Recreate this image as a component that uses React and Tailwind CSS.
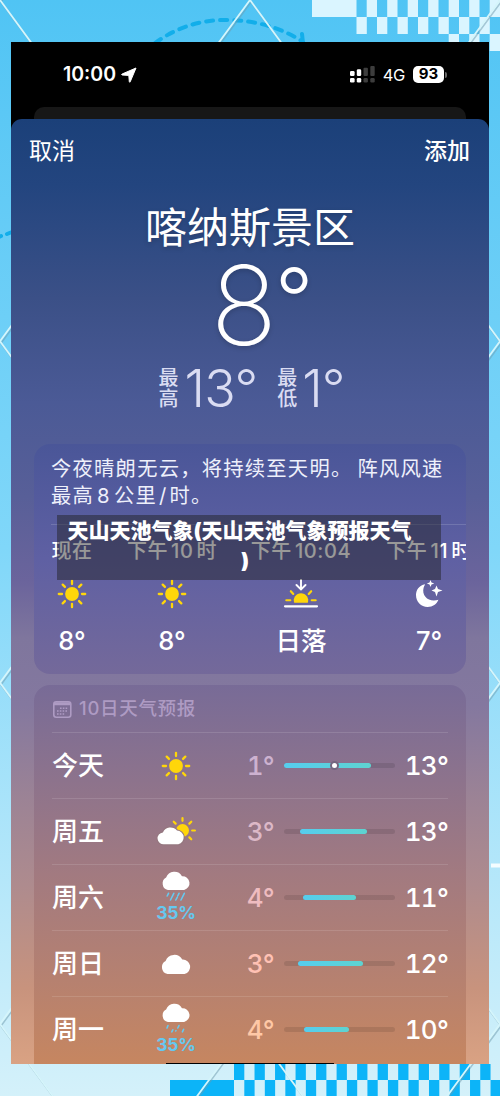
import React from 'react';

const hours = [
  { time: '现在', icon: 'sun', value: '8°' },
  { time: '下午', clock: '10', suffix: '时', icon: 'sun', value: '8°' },
  { time: '下午', clock: '10:04', icon: 'sunset', value: '日落' },
  { time: '下午', clock: '11', suffix: '时', icon: 'moon', value: '7°' },
];

const days = [
  { day: '今天', icon: 'sun', low: '1°', high: '13°', start: 0, width: 87, now: true, lowColor: 'text-[#cdb2d0]' },
  { day: '周五', icon: 'partly', low: '3°', high: '13°', start: 16, width: 67, lowColor: 'text-[#dcb8c7]' },
  { day: '周六', icon: 'rain', chance: '35%', low: '4°', high: '11°', start: 19, width: 53, lowColor: 'text-[#efbcc0]' },
  { day: '周日', icon: 'cloud', low: '3°', high: '12°', start: 14, width: 65, lowColor: 'text-[#ffc1b4]' },
  { day: '周一', icon: 'drizzle', chance: '35%', low: '4°', high: '10°', start: 20, width: 45, lowColor: 'text-[#ffc8a6]' },
];

const CLOUD = 'M7.5 21 A7 7 0 0 1 5.6 8 A9.2 9.2 0 0 1 22.3 6.6 A7.3 7.3 0 0 1 24.5 21 Z';

const Sun = () => (
  <svg width="30" height="30" viewBox="-15 -15 30 30">
    <circle r="6.9" fill="#ffd60a" />
    {[0, 45, 90, 135, 180, 225, 270, 315].map((a) => (
      <line key={a} x1="0" y1="-10" x2="0" y2="-13.2" stroke="#ffd60a" strokeWidth="2.3" strokeLinecap="round" transform={`rotate(${a})`} />
    ))}
  </svg>
);

const Sunset = () => (
  <svg width="36" height="30" viewBox="0 0 36 30" fill="none" strokeLinecap="round">
    <path d="M11.2 23.7 A7.2 7.2 0 1 1 24.8 23.7 Z" fill="#ffd60a" />
    <path d="M3.3 21.3H7.3M28.7 21.3H32.7M7.8 12.2L10.3 15M28.2 12.2L25.7 15" stroke="#ffd60a" strokeWidth="2.1" />
    <path d="M18 0V10M13.5 6L18 10.5L22.5 6" stroke="#fff" strokeWidth="1.9" />
    <path d="M2 27.3H34" stroke="#fff" strokeWidth="2.2" />
  </svg>
);

const Moon = () => (
  <svg width="30" height="30" viewBox="0 0 30 30" fill="#fff">
    <path d="M11.2 5.2 C4.8 6.4 2 11.2 2 16 C2 22.6 7 28 13.6 28 C18.7 28 22.8 25.2 24.4 20.8 C15.5 24 7.3 17.4 9.6 8.8 C10 7.4 10.5 6.3 11.2 5.2 Z" />
    <path d="M22.5 6.5 L24 10 L28.5 11.5 L24 13 L22.5 17.5 L21 13 L17.5 11.5 L21 10 Z" />
    <path d="M16.5 1 L17.5 3.5 L20.3 4.5 L17.5 5.5 L16.5 8 L15.5 5.5 L12.8 4.5 L15.5 3.5 Z" />
  </svg>
);

const Partly = () => (
  <svg width="40" height="30" viewBox="0 0 40 30">
    <g transform="translate(26.5 13.5)">
      <circle r="6.5" fill="#ffd60a" />
      {[-45, 0, 45, 90, 135].map((a) => (
        <line key={a} x1="0" y1="-9.7" x2="0" y2="-12.4" stroke="#ffd60a" strokeWidth="2.2" strokeLinecap="round" transform={`rotate(${a})`} />
      ))}
    </g>
    <path d="M8.2 27.3 A5.9 5.9 0 0 1 6.9 15.4 A8.3 8.3 0 0 1 21 13.5 A7 7 0 0 1 22.3 27.3 Z" fill="#fff" stroke="#95777f" strokeWidth="2.2" paintOrder="stroke" />
  </svg>
);

const Cloud = () => (
  <svg width="32" height="22" viewBox="0 0 32 22">
    <path d={CLOUD} fill="#fff" />
  </svg>
);

const Rain = ({ light }) => (
  <svg className="-mt-[8px] shrink-0" width="32" height="34" viewBox="0 0 32 34">
    <path d={CLOUD} fill="#fff" transform="translate(.8 0) scale(.95)" />
    <path
      d={light ? 'M8 23.5L7 26M12.8 27.8L11.8 29.8M19 23.5L17.8 26M23.6 27.3L22.4 29.8M16 28.6L15.8 29' : 'M8.5 23.3L7.2 26M13.8 23.3L10.5 30M19 23.3L17.7 26M24.3 23.3L21 30M17.2 27.3L15.8 30'}
      stroke="#66c9f0"
      strokeWidth="1.6"
      strokeLinecap="round"
    />
  </svg>
);

const icons = {
  sun: <Sun />,
  sunset: <Sunset />,
  moon: <Moon />,
  partly: <Partly />,
  cloud: <Cloud />,
  rain: <Rain />,
  drizzle: <Rain light />,
};

// Paper texture page: diamond lattice, dashed arcs and checker strips
const Backdrop = () => {
  const top = [[448.7, 34], [469.2, 34], [489.7, 34]];
  for (let i = 0; i < 7; i++) {
    top.push([366.7 + i * 20.5, 0], [356.5 + i * 20.5, 17]);
  }
  const bottom = [];
  for (let i = 0; i < 13; i++) {
    bottom.push([234 + i * 20.52, 1064], [244.3 + i * 20.52, 1080]);
  }
  return (
    <svg className="absolute inset-0" width="500" height="1096" viewBox="0 0 500 1096" fill="none">
      <rect x="312" width="44.5" height="17" fill="#daf5ff" />
      {top.map(([x, y]) => <rect key={`${x}-${y}`} x={x} y={y} width="10.3" height="17" fill="#daf5ff" />)}
      <rect x="170" y="1080" width="64" height="16" fill="#0cb4f8" />
      {bottom.map(([x, y]) => <rect key={`${x}-${y}`} x={x} y={y} width="10.3" height="16" fill="#0cb4f8" />)}
      <path d="M155 43Q187 20 225 20Q270 20 303 42M302 34L303 43" stroke="#12aeea" strokeWidth="4" strokeDasharray="7 7" strokeLinecap="round" />
      <path d="M0 236.5L1 236M7 234L12 232" stroke="#12aeea" strokeWidth="4" strokeLinecap="round" />
      {[0, 341.3, 682.7, 1024].map((y) => (
        <g key={y}>
          <path d={`M1 ${y + 2}L126 ${y + 172}M1 ${y + 2}L126 ${y - 168}M251 ${y + 2}L126 ${y + 172}M251 ${y + 2}L376 ${y + 172}M501 ${y + 2}L376 ${y + 172}M501 ${y + 2}L376 ${y - 168}`} stroke="#6f9cae" strokeOpacity=".5" strokeWidth="1.5" />
          <path d={`M0 ${y}L125 ${y + 170.6}M0 ${y}L125 ${y - 170.6}M250 ${y}L125 ${y + 170.6}M250 ${y}L375 ${y + 170.6}M500 ${y}L375 ${y + 170.6}M500 ${y}L375 ${y - 170.6}`} stroke="#d5f5fb" strokeWidth="1.8" />
        </g>
      ))}
      <path d="M491 865.5H500" stroke="#f4fdff" strokeWidth="4" />
    </svg>
  );
};

const StatusBar = () => (
  <div className="flex h-[65px] shrink-0 items-center justify-between pl-[52px] pr-[42px] text-white">
    <div className="flex items-center gap-[5px] pt-px text-[19.5px] font-semibold">
      10:00
      <svg width="16" height="16" viewBox="0 0 16 16" fill="#fff">
        <path d="M15 1 L9.2 14.8 Q8.7 15.8 8.3 14.6 L7.8 8.4 L1.2 8 Q0 7.6 1.1 7 Z" stroke="#fff" strokeWidth="1" strokeLinejoin="round" />
      </svg>
    </div>
    <div className="flex items-center gap-[8px]">
      <svg width="25" height="17" viewBox="0 0 25 17">
        <g fill="#fff">
          <rect x="0" y="5" width="4.6" height="5" rx="1.3" />
          <rect x="6.8" y="3.3" width="4.4" height="6.7" rx="1.3" />
          <rect x="0" y="12" width="4.6" height="4.6" rx="1.3" />
          <rect x="6.8" y="12" width="4.4" height="4.6" rx="1.3" />
        </g>
        <g fill="#3d3d3d">
          <rect x="13.5" y="1.8" width="4.4" height="8.2" rx="1" />
          <rect x="20.3" y="0" width="4.4" height="10" rx="1" />
          <rect x="13.5" y="12" width="4.4" height="4.6" rx="1.3" />
          <rect x="20.3" y="12" width="4.4" height="4.6" rx="1.3" />
        </g>
      </svg>
      <span className="pt-px text-[16.5px] tracking-[-0.3px]">4G</span>
      <div className="flex items-center gap-px">
        <div className="flex h-[17px] w-[31px] items-center justify-center rounded-[5px] bg-white text-[15px] font-bold text-black">93</div>
        <div className="h-[6px] w-[2px] rounded-r bg-[#666]" />
      </div>
    </div>
  </div>
);

const HourlyCard = () => (
  <div className="mx-[23px] mt-[24px] h-[230px] overflow-hidden rounded-[16px] bg-linear-to-b from-[#4a5698] via-[#5f60a3] to-[#74699a]">
    <p className="h-[80px] whitespace-nowrap pl-[17px] pt-[11px] text-[20.3px] leading-[27px] tracking-[1.25px] text-[#eef0fb]">
      今夜晴朗无云，将持续至天明。<span className="ml-[5px]">阵风风速</span>
      <br />
      最高<span className="mx-[3px]">8</span>公里<span className="mx-[2px]">/</span>时。
    </p>
    <div className="ml-[17px] flex border-t border-white/15 pt-[11px] text-white">
      {hours.map((h, i) => (
        <div
          key={i}
          className={`flex shrink-0 flex-col items-center ${['w-[42px]', 'ml-[33px] w-[92px]', 'ml-[29px] w-[108px]', 'ml-[29px] w-[90px]'][i]}`}
        >
          <span className="flex h-[30px] gap-[3px] whitespace-nowrap text-[20px] font-medium leading-[30px] tracking-[0.6px]">
            {h.time}
            {h.clock && <span>{h.clock}</span>}
            {h.suffix && <span>{h.suffix}</span>}
          </span>
          <div className="mt-[13px] flex h-[30px] items-center">{icons[h.icon]}</div>
          <span className="mt-[14px] text-[25.5px] font-medium leading-[36px]">{h.value}</span>
        </div>
      ))}
    </div>
  </div>
);

const ForecastCard = () => (
  <div className="mx-[23px] mt-[11px] h-[379px] overflow-hidden rounded-t-[16px] bg-linear-to-b from-[#786b97] from-0% via-[#a27a80] via-50% to-[#c68660] px-[18px]">
    <div className="flex h-[47px] items-center gap-[7px] pt-px text-[18.5px] font-medium tracking-[0.7px] text-[#ae9bc3]">
      <svg width="20" height="19" viewBox="0 0 20 19" fill="none">
        <rect x="1.8" y="1.8" width="17" height="15.4" rx="2.5" stroke="#ae9bc3" strokeWidth="1.6" />
        <path d="M2 3.8H18.6" stroke="#ae9bc3" strokeWidth="3" />
        <path d="M8 8.3H16M5 11.1H16M5 13.9H13" stroke="#ae9bc3" strokeWidth="1.5" strokeDasharray="1.6 1.2" />
      </svg>
      10日天气预报
    </div>
    {days.map((d) => (
      <div key={d.day} className="flex h-[66px] items-center border-t border-white/12">
        <span className="w-[92px] text-[26px] font-medium text-white">{d.day}</span>
        <div className="flex w-[64px] flex-col items-center justify-center">
          {icons[d.icon]}
          {d.chance && <span className="mb-[-5px] text-[17.5px] font-bold leading-[18px] tracking-[-0.2px] text-[#65c8f0]">{d.chance}</span>}
        </div>
        <span className={`w-[66px] text-right text-[26px] font-medium tracking-[-0.7px] tabular-nums ${d.lowColor}`}>{d.low}</span>
        <div className="relative ml-[10px] h-[5px] w-[111px] rounded-full bg-black/10">
          <div
            className="absolute inset-y-0 rounded-full bg-linear-to-r from-[#56cdee] to-[#5ed3d0]"
            style={{ left: d.start, width: d.width }}
          />
          {d.now && (
            <div className="absolute -top-[2px] left-[46px] size-[9px] rounded-full border-2 border-[#746780] bg-white" />
          )}
        </div>
        <span className="flex-1 text-right text-[26px] font-medium tracking-[-0.8px] tabular-nums text-white">{d.high}</span>
      </div>
    ))}
  </div>
);

function App() {
  return (
    <div className="relative h-[1096px] w-[500px] overflow-hidden bg-linear-to-b from-[#50c4f4] via-[#80d7f9] via-50% to-[#d4f1fa] font-['Inter','Noto_Sans_CJK_SC',sans-serif]">
      <Backdrop />
      <div className="relative ml-[11px] mt-[42px] flex h-[1022px] w-[478px] flex-col overflow-hidden bg-black">
        <StatusBar />
        <div className="mx-[23px] h-[12px] shrink-0 rounded-t-[10px] bg-[#171717]" />
        <div className="flex-1 rounded-t-[11px] bg-[linear-gradient(180deg,#1b4079_0%,#23457f_7%,#3b5087_19%,#4b5a96_30%,#585f98_40%,#6b649c_49%,#7f769d_55%,#84789f_62%,#9c8395_72%,#ae8b8e_81%,#c8937d_92%,#d9a283_100%)]">
          <div className="flex justify-between pl-[18px] pr-[19px] pt-[15px] text-[23px] leading-[34px] text-white">
            <span>取消</span>
            <span className="font-medium">添加</span>
          </div>
          <div className="mt-[29px] flex flex-col items-center text-white [text-shadow:0_2px_5px_rgba(0,0,0,0.18)]">
            <h1 className="text-[42px] font-normal leading-[62px]">喀纳斯景区</h1>
            <div className="ml-[24px] mt-[-8px] flex text-[110px] font-extralight leading-[108px]">
              8<span className="ml-[-2px] mt-[3px] text-[84px] font-light leading-[90px]">°</span>
            </div>
          </div>
          <div className="flex h-[60px] items-center justify-center pl-[3px] text-[#dadcf2]">
            <span className="w-[20px] text-[20px] font-medium leading-[21px]">最高</span>
            <span className="ml-[6px] text-[52px] font-light tracking-[-0.8px]">13°</span>
            <span className="ml-[20px] w-[20px] text-[20px] font-medium leading-[21px]">最低</span>
            <span className="ml-[5px] text-[52px] font-light tracking-[-1px]">1°</span>
          </div>
          <div className="h-px" />
          <HourlyCard />
          <ForecastCard />
        </div>
        <div className="absolute bottom-0 left-[155px] h-px w-[168px] bg-black" />
      </div>
      <div className="absolute left-[57px] top-[515px] h-[65px] w-[384px] whitespace-nowrap bg-[#1d1d1a]/45 text-center text-[21px] font-black leading-[32px] text-white">
        <div className="pr-[19px]">天山天池气象(天山天池气象预报天气</div>
        <div className="mt-[-2px] pr-[8px]">)</div>
      </div>
    </div>
  );
}

export default App;
